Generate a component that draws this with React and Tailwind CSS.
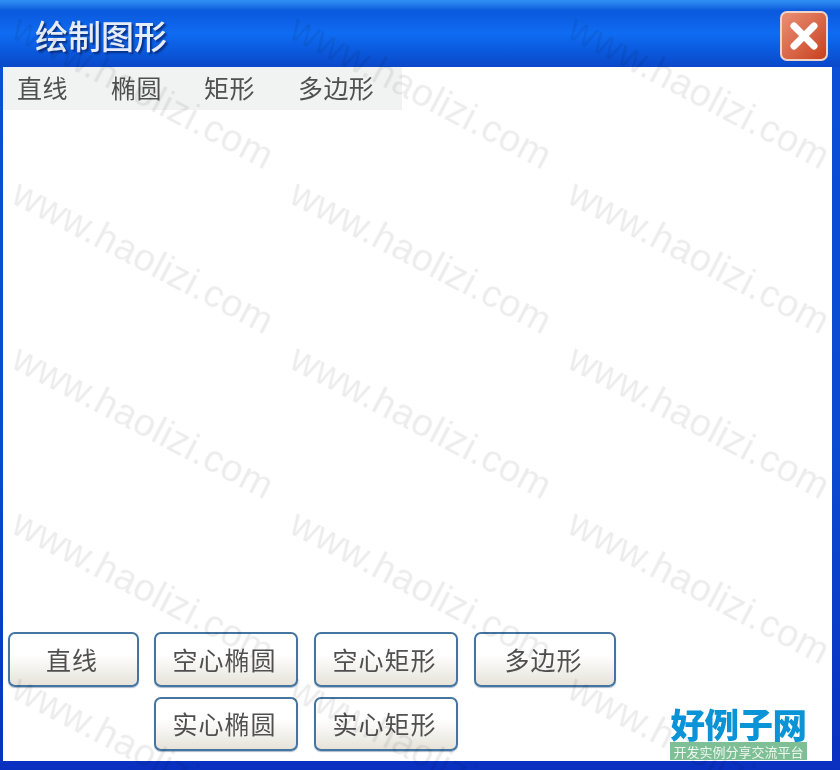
const CJK = 'font-["Noto_Sans_CJK_SC",sans-serif]'

const MENU_ITEMS = [
  { label: '直线', width: 'w-[94px]' },
  { label: '椭圆', width: 'w-[93px]' },
  { label: '矩形', width: 'w-[94px]' },
  { label: '多边形', width: 'w-[118px]' },
]

function ActionButton({ label, size }) {
  return (
    <button
      className={`${size} shrink-0 rounded-[7px] border-2 border-[#44749f] bg-gradient-to-b from-white from-40% to-[#e6e3da] pr-[3px] text-[25px] tracking-[1px] text-[#505050] shadow-[0_1px_1px_rgba(40,80,120,0.4)] blur-[0.5px]`}
    >
      {label}
    </button>
  )
}

function Watermarks() {
  const marks = Array.from({ length: 15 })
  return (
    <div className="pointer-events-none absolute inset-0 overflow-hidden">
      <div className="ml-[4px] mt-[9px] grid grid-cols-[repeat(3,278px)] auto-rows-[165px]">
        {marks.map((_, i) => (
          <div key={i} className="flex items-center justify-center">
            <span className='rotate-[27.5deg] whitespace-nowrap font-["Liberation_Sans",sans-serif] text-[38px] leading-none tracking-[0.5px] text-black/[0.075] blur-[0.6px]'>
              www.haolizi.com
            </span>
          </div>
        ))}
      </div>
    </div>
  )
}

export default function App() {
  return (
    <div className={`relative flex h-[770px] w-[840px] flex-col overflow-hidden bg-[linear-gradient(180deg,#0b50d8_0%,#0a4ad0_60%,#0a30c0_100%)] ${CJK}`}>
      {/* Title bar */}
      <div className="flex h-[67px] shrink-0 items-center justify-between bg-[linear-gradient(180deg,#2e90f2_0%,#2a86ee_4%,#0b58dc_16%,#0f6cf2_50%,#0b5ade_75%,#0a48c8_100%)] pt-[4px] pl-[35px] pr-[12px]">
        <h1 className="text-[33px] font-medium leading-none text-[#e6edf8] [text-shadow:2px_2px_2px_#0a2f80] blur-[0.6px]">绘制图形</h1>
        <button className="flex h-[50px] w-[48px] items-center justify-center rounded-[7px] border-2 border-[#efd3c9] bg-gradient-to-br from-[#ea8f74] to-[#c63f18] blur-[0.4px]">
          <svg viewBox="0 0 32 32" className="h-[32px] w-[32px]" fill="none" stroke="white" strokeWidth="7" strokeLinecap="round">
            <path d="M6 6 L26 26 M26 6 L6 26" />
          </svg>
        </button>
      </div>

      {/* Client area */}
      <div className="mb-[9px] ml-[3px] mr-[8px] flex min-h-0 flex-1 flex-col bg-white">
        <div className="flex h-[43px] shrink-0 self-start bg-[#f1f3f2]">
          {MENU_ITEMS.map((item) => (
            <div key={item.label} className={`${item.width} flex items-center pb-[2px] pl-[14px] text-[25px] leading-none tracking-[0.4px] text-[#505050] blur-[0.5px]`}>
              {item.label}
            </div>
          ))}
        </div>

        <div className="mb-[10px] mt-auto flex flex-col gap-[10px] pl-[5px]">
          <div className="flex">
            <ActionButton label="直线" size="h-[55px] w-[131px]" />
            <div className="ml-[15px] flex gap-[16px]">
              <ActionButton label="空心椭圆" size="h-[55px] w-[144px]" />
              <ActionButton label="空心矩形" size="h-[55px] w-[144px]" />
              <ActionButton label="多边形" size="h-[55px] w-[142px]" />
            </div>
          </div>
          <div className="flex gap-[16px] pl-[146px]">
            <ActionButton label="实心椭圆" size="h-[54px] w-[144px]" />
            <ActionButton label="实心矩形" size="h-[54px] w-[144px]" />
          </div>
        </div>
      </div>

      <Watermarks />

      {/* Site logo overlay */}
      <div className="absolute left-[670px] top-[705px] flex w-[137px] flex-col items-center">
        <span className="whitespace-nowrap text-[34.5px] font-black leading-[37px] tracking-[-0.5px] text-[#0b93d8] blur-[0.4px]">好例子网</span>
        <span className="flex h-[18px] w-full items-center justify-center whitespace-nowrap bg-[#7fbf95] text-[13px] leading-none text-white/85 blur-[0.3px]">开发实例分享交流平台</span>
      </div>
    </div>
  )
}
